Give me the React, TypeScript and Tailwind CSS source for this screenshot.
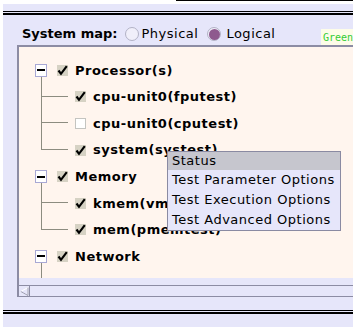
import React from "react";

type Child = { label: string; checked: boolean };
type Group = { label: string; children: Child[] };

const groups: Group[] = [
  {
    label: "Processor(s)",
    children: [
      { label: "cpu-unit0(fputest)", checked: true },
      { label: "cpu-unit0(cputest)", checked: false },
      { label: "system(systest)", checked: true },
    ],
  },
  {
    label: "Memory",
    children: [
      { label: "kmem(vmemtest)", checked: true },
      { label: "mem(pmemtest)", checked: true },
    ],
  },
  {
    label: "Network",
    // next node is scrolled below the fold, only its box edge shows
    children: [{ label: "", checked: true }],
  },
];

const menuItems = ["Status", "Test Parameter Options", "Test Execution Options", "Test Advanced Options"];

function CheckBox({ checked }: { checked: boolean }) {
  if (!checked) {
    return <div className="w-[11px] h-[11px] shrink-0 border border-[#c4c4c0] bg-white" />;
  }
  return (
    <div className="w-[11px] h-[11px] shrink-0 bg-[#d6d2c4] flex items-center justify-center">
      <svg width="11" height="11" viewBox="0 0 11 11">
        <polyline points="1.5,5.5 4,8.8 9.8,1.2" fill="none" stroke="#000" strokeWidth="2.2" />
      </svg>
    </div>
  );
}

function Expander() {
  return (
    <div className="w-[12px] h-[13px] shrink-0 border border-[#a8a8d4] bg-white flex items-center justify-center">
      <div className="w-[8px] h-[2px] bg-black" />
    </div>
  );
}

function GroupRow({ label }: { label: string }) {
  return (
    <div className="flex items-center h-[26.6px]">
      <div className="flex flex-col w-[12px] h-full shrink-0">
        <div className="flex-1" />
        <Expander />
        <div className="flex-1 w-px ml-[6px] bg-[#8c8c80]" />
      </div>
      <div className="ml-[10px]">
        <CheckBox checked />
      </div>
      <span className="ml-[7px] font-bold whitespace-nowrap">{label}</span>
    </div>
  );
}

function ChildRow({ child, last }: { child: Child; last: boolean }) {
  return (
    <div className="flex items-center h-[26.6px] pl-[6px]">
      <div className="flex flex-col w-[27px] h-full shrink-0">
        <div className="h-1/2 border-l border-b border-[#8c8c80]" />
        <div className={last ? "h-1/2" : "h-1/2 border-l border-[#8c8c80]"} />
      </div>
      <div className="ml-[7px]">
        <CheckBox checked={child.checked} />
      </div>
      {child.label && <span className="ml-[7px] font-bold whitespace-nowrap">{child.label}</span>}
    </div>
  );
}

function Radio({ selected }: { selected: boolean }) {
  return (
    <div className="w-[14px] h-[14px] rounded-full border border-[#b2b2c6] bg-[#f0effa] flex items-center justify-center shrink-0">
      {selected && <div className="w-[11px] h-[11px] rounded-full bg-[#8e5a8e]" />}
    </div>
  );
}

export default function App() {
  return (
    <div className="relative w-[358px] h-[332px] bg-white overflow-hidden font-['DejaVu_Sans',sans-serif] text-[13px] tracking-[0.5px] text-black">
      <div className="h-px ml-[176px] w-[177px] bg-black" />
      <div className="mt-[3px] ml-[3px] w-[350px] h-[323px] bg-[#e6e6fa] flex flex-col">
        <div className="mt-[7px] h-px bg-black" />
        <div className="mt-px h-[2px] bg-black" />

        {/* header */}
        <div className="flex h-[30px] pl-[19px]">
          <div className="flex items-center pt-[8px]">
            <span className="font-bold tracking-normal">System map:</span>
            <div className="ml-[7px]">
              <Radio selected={false} />
            </div>
            <span className="ml-[3px]">Physical</span>
            <div className="ml-[9px]">
              <Radio selected />
            </div>
            <span className="ml-[5px]">Logical</span>
          </div>
          <div className="ml-auto self-end h-[16px] w-[32px] bg-[#fdfce8] flex items-center pl-[2px] overflow-hidden">
            <span className="font-['DejaVu_Sans_Mono',monospace] text-[10px] tracking-normal text-[#33cc33]">Green</span>
          </div>
        </div>

        {/* scroll pane */}
        <div className="ml-[14px] h-[252px] border-l-2 border-t-2 border-[#8c8ca4] flex flex-col">
          <div className="h-[231px] bg-[#fff5ee] overflow-hidden pl-[16px] pt-[10px]">
            {groups.map((g) => (
              <div key={g.label}>
                <GroupRow label={g.label} />
                {g.children.map((c, i) => (
                  <ChildRow key={i} child={c} last={i === g.children.length - 1} />
                ))}
              </div>
            ))}
          </div>
          <div className="h-[7px]" />
          <div className="h-[12px] border-t border-b border-[#8c8ca4] flex">
            <div className="w-[11px] h-full flex items-center justify-center border-r border-[#8c8ca4]">
              <svg width="9" height="9" viewBox="0 0 9 9">
                <polygon points="8,0.5 8,8.5 0.8,4.5" fill="#e6e6fa" stroke="#ffffff" strokeWidth="1" />
                <line x1="8" y1="0.5" x2="8" y2="8.5" stroke="#9a9ab0" strokeWidth="1" />
                <line x1="0.8" y1="4.5" x2="8" y2="8.5" stroke="#9a9ab0" strokeWidth="1" />
              </svg>
            </div>
          </div>
        </div>

        <div className="mt-[13px] h-px bg-black" />
        <div className="mt-px h-[2px] bg-black" />
      </div>

      {/* context menu */}
      <div className="absolute left-[167px] top-[151px] w-[174px] border border-[#8a8aa2] bg-[#e6e6fa] flex flex-col">
        {menuItems.map((m, i) => (
          <div
            key={m}
            className={`${i === 0 ? "h-[18px] bg-[#c6c6ce]" : "h-[20px]"} flex items-center px-[4px] whitespace-nowrap`}
          >
            {m}
          </div>
        ))}
      </div>
    </div>
  );
}
